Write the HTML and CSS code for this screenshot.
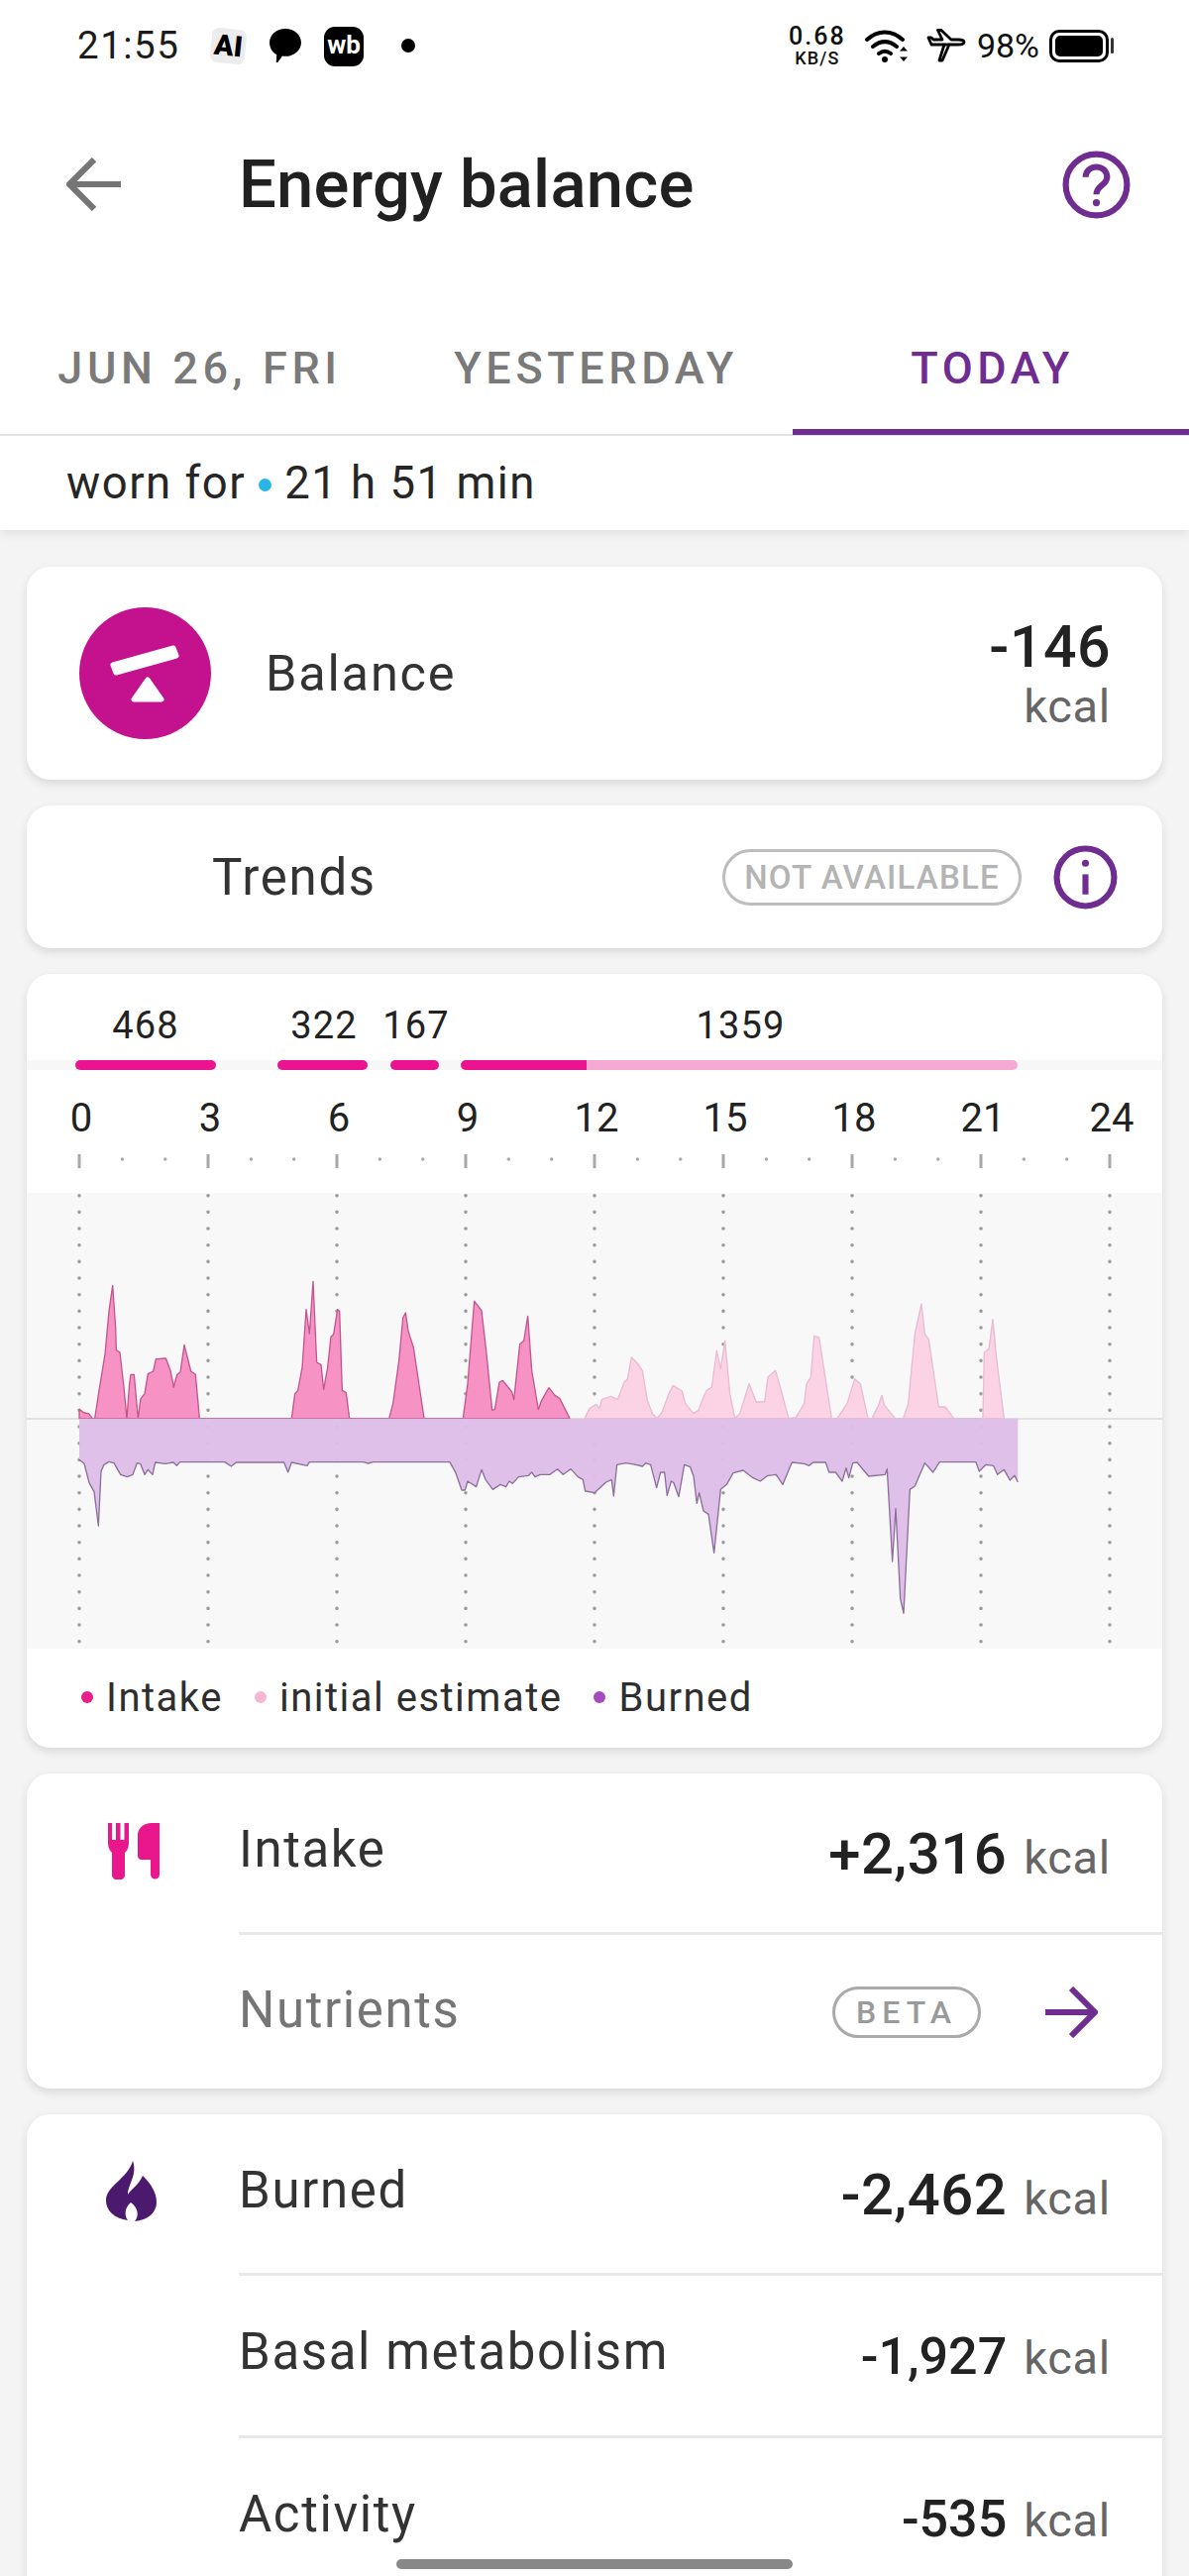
FILE: index.html
```html
<!DOCTYPE html>
<html lang="en">
<head>
<meta charset="utf-8">
<title>Energy balance</title>
<link rel="stylesheet" href="styles.css">
</head>
<body>
<div class="screen">
  <header class="top">
    <div class="status">
      <div class="status-left">
        <span class="clock">21:55</span>
        <span class="ai-badge">AI</span>
        <svg class="ic-msg" viewBox="0 0 31 33"><path d="M15.5 0C24 0 31 6 31 13.5S24 27 15.5 27c-1 0-2 0-3-.3L8 33c-1 .4-1.5-.2-1.400-1l.4-6.500C2.700 23 0 18.500 0 13.500 0 6 7 0 15.500 0Z"/></svg>
        <span class="wb-badge">wb</span>
        <span class="status-dot"></span>
      </div>
      <div class="status-right">
        <div class="speed"><span class="speed-num">0.68</span><span class="speed-unit">KB/S</span></div>
        <svg class="ic-wifi" viewBox="0 0 45 34"><path class="wifi-arc" d="M2 11C13 1 27 1 38 11M8 18c8-6.500 16-6.500 24 0M14 25c4-3 8-3 12 0"/><circle cx="20" cy="31" r="3"/><path d="M39 18l4 4.500h-8ZM39 33l4-4.500h-8Z"/></svg>
        <svg class="ic-plane" viewBox="0 0 40 34"><path class="plane-line" d="M2 9l3 7h27c4 0 6-1 6-2.500S35 11 32 11h-7L15 1.500h-3.500L16 11H7L5 9ZM18 16h5l-7 16h-3Z"/></svg>
        <span class="battery-pct">98%</span>
        <div class="battery"><span class="battery-fill"></span></div>
        <span class="battery-nub"></span>
      </div>
    </div>
    <div class="appbar">
      <svg class="ic-back" viewBox="0 0 53 52"><path d="M53 26H5M27 2 3 26l24 24"/></svg>
      <h1 class="title">Energy balance</h1>
      <svg class="ic-help" viewBox="0 0 67 67"><circle cx="33.500" cy="33.500" r="30"/><path d="M23 26c0-6 5-10 10.500-10S44 20 44 26c0 8-10.500 8-10.500 17"/><circle class="solid" cx="33.500" cy="51" r="3.500"/></svg>
    </div>
    <nav class="tabs">
      <div class="tab">JUN 26, FRI</div>
      <div class="tab">YESTERDAY</div>
      <div class="tab tab-active">TODAY</div>
    </nav>
    <div class="worn"><span>worn for</span><span class="worn-dot"></span><span>21 h 51 min</span></div>
  </header>

  <main class="cards">
    <section class="card balance">
      <svg class="ic-balance" viewBox="0 0 133 133"><circle cx="66.500" cy="66.500" r="66.500" class="balance-disc"/><path class="balance-mark" d="M34 58 95 41l3 8-61 17ZM69 73l14 20H55Z"/></svg>
      <div class="balance-name">Balance</div>
      <div class="balance-value"><div class="num">-146</div><div class="unit">kcal</div></div>
    </section>

    <section class="card trends">
      <div class="trends-name">Trends</div>
      <span class="pill pill-na">NOT AVAILABLE</span>
      <svg class="ic-info" viewBox="0 0 64 64"><circle cx="32" cy="32" r="28.500"/><path d="M32 29v20"/><circle class="solid" cx="32" cy="18" r="3.500"/></svg>
    </section>

    <section class="card chart">
      <div class="segments">
        <div class="seg" style="width:142px;margin-left:0"><span>468</span><i class="bar"></i></div>
        <div class="seg" style="width:91px;margin-left:62px"><span>322</span><i class="bar"></i></div>
        <div class="seg" style="width:49px;margin-left:23px"><span>167</span><i class="bar"></i></div>
        <div class="seg" style="width:562px;margin-left:22px"><span>1359</span><i class="bar bar-split" style="--done:22.600%"></i></div>
      </div>
      <div class="hours">
        <span>0</span><span>3</span><span>6</span><span>9</span><span>12</span><span>15</span><span>18</span><span>21</span><span>24</span>
      </div>
      <svg class="plot" viewBox="27 1160 1146 504">
        <rect class="plot-bg" x="27" y="1204" width="1146" height="460"/>
        <g class="ticks">
          <path d="M80 1165v14M210 1165v14M340 1165v14M470 1165v14M600 1165v14M730 1165v14M860 1165v14M990 1165v14M1120 1165v14"/>
        </g>
        <g class="minor">
          <path d="M123.300 1170h.1M166.700 1170h.1M253.300 1170h.1M296.700 1170h.1M383.300 1170h.1M426.700 1170h.1M513.300 1170h.1M556.700 1170h.1M643.300 1170h.1M686.700 1170h.1M773.300 1170h.1M816.700 1170h.1M903.300 1170h.1M946.700 1170h.1M1033.300 1170h.1M1076.700 1170h.1"/>
        </g>
        <g class="gridlines">
          <path d="M80 1206.700V1660M210 1206.700V1660M340 1206.700V1660M470 1206.700V1660M600 1206.700V1660M730 1206.700V1660M860 1206.700V1660M990 1206.700V1660M1120 1206.700V1660"/>
        </g>
        <path class="zero" d="M27 1432H1173"/>
        <g transform="translate(60 1240) scale(.33333)">
          <path class="area-est" transform="translate(1440 0)" d="M150 575L165 545L185 532L195 545L202 518L230 508L250 518L270 465L280 455L292 390L310 408L325 430L340 520L355 560L370 575L385 555L405 500L418 475L445 492L455 530L480 560L495 550L510 510L520 490L535 480L550 370L562 425L575 340L590 500L605 575L620 560L648 470L670 525L695 525L705 450L728 430L745 490L768 575L790 572L815 530L822 470L835 450L845 325L860 330L898 575L915 575L945 530L968 455L985 470L1008 575L1020 575L1040 535L1050 505L1058 535L1090 575L1115 575L1130 530L1150 320L1170 228L1180 320L1192 335L1222 540L1242 540L1268 575L1356 575L1360 375L1374 365L1386 275L1398 400L1420 575Z"/>
          <path class="area-intake" d="M60 575L60 548L75 558L88 560L100 575L107 575L120 490L138 380L150 250L161 172L170 300L172 368L183 375L195 480L204 575L212 470L216 442L226 442L232 510L238 575L246 515L258 500L268 440L284 432L292 395L322 393L336 430L346 480L356 442L366 435L378 352L398 432L412 442L424 575L703 575L713 500L722 490L735 420L747 245L757 318L768 160L779 405L792 412L800 487L812 420L822 328L830 320L842 245L848 250L856 490L868 497L878 575L998 575L1010 530L1028 400L1040 270L1048 255L1056 310L1072 360L1104 575L1222 575L1236 470L1256 220L1278 248L1292 370L1310 550L1318 548L1332 465L1342 460L1370 495L1376 518L1394 350L1406 340L1418 265L1430 430L1450 548L1460 520L1482 482L1500 505L1515 515L1545 575Z"/>
          <path class="area-burn" d="M60 575L60 700L75 712L90 770L105 797L118 900L126 735L135 715L150 706L165 710L185 745L205 752L222 745L235 710L245 712L258 745L268 730L282 745L290 708L320 712L345 708L355 718L365 707L500 707L520 720L535 708L680 708L692 738L703 708L750 718L757 707L920 707L935 711L950 707L1182 707L1200 740L1218 792L1228 792L1236 765L1262 782L1278 730L1290 760L1312 790L1335 775L1352 782L1362 765L1372 772L1390 752L1420 748L1430 738L1440 752L1455 745L1485 745L1508 728L1525 745L1548 728L1570 752L1585 760L1592 795L1620 800L1655 768L1672 760L1678 810L1688 715L1715 710L1745 715L1765 720L1775 710L1790 715L1808 785L1820 738L1832 738L1840 808L1852 765L1860 770L1875 812L1892 715L1910 722L1920 750L1930 832L1937 800L1950 855L1965 865L1982 982L2002 790L2020 775L2040 740L2070 732L2100 755L2122 765L2145 748L2170 745L2190 775L2218 708L2255 712L2270 718L2282 708L2320 708L2330 738L2350 738L2370 765L2382 725L2390 755L2402 710L2415 708L2450 750L2500 745L2506 728L2522 1008L2532 848L2546 1120L2556 1165L2575 790L2590 780L2620 710L2645 738L2665 707L2775 707L2785 735L2805 715L2828 718L2840 745L2860 730L2878 762L2892 748L2902 768L2902 575Z"/>
          <path class="line-burn" d="M60 700L75 712L90 770L105 797L118 900L126 735L135 715L150 706L165 710L185 745L205 752L222 745L235 710L245 712L258 745L268 730L282 745L290 708L320 712L345 708L355 718L365 707L500 707L520 720L535 708L680 708L692 738L703 708L750 718L757 707L920 707L935 711L950 707L1182 707L1200 740L1218 792L1228 792L1236 765L1262 782L1278 730L1290 760L1312 790L1335 775L1352 782L1362 765L1372 772L1390 752L1420 748L1430 738L1440 752L1455 745L1485 745L1508 728L1525 745L1548 728L1570 752L1585 760L1592 795L1620 800L1655 768L1672 760L1678 810L1688 715L1715 710L1745 715L1765 720L1775 710L1790 715L1808 785L1820 738L1832 738L1840 808L1852 765L1860 770L1875 812L1892 715L1910 722L1920 750L1930 832L1937 800L1950 855L1965 865L1982 982L2002 790L2020 775L2040 740L2070 732L2100 755L2122 765L2145 748L2170 745L2190 775L2218 708L2255 712L2270 718L2282 708L2320 708L2330 738L2350 738L2370 765L2382 725L2390 755L2402 710L2415 708L2450 750L2500 745L2506 728L2522 1008L2532 848L2546 1120L2556 1165L2575 790L2590 780L2620 710L2645 738L2665 707L2775 707L2785 735L2805 715L2828 718L2840 745L2860 730L2878 762L2892 748L2902 768"/>
        </g>
      </svg>
      <div class="legend">
        <span class="legend-item"><i class="dot dot-intake"></i>Intake</span>
        <span class="legend-item"><i class="dot dot-est"></i>initial estimate</span>
        <span class="legend-item"><i class="dot dot-burn"></i>Burned</span>
      </div>
    </section>

    <section class="card list list-intake">
      <div class="side">
        <svg class="ic-food" viewBox="0 0 52 57"><path d="M0 0h4v17h4V0h4.500v17h4V0H21v20c0 5-2 8-4 10v23a6.500 4.500 0 0 1-13 0V30C2 28 0 25 0 20ZM30 12C30 5 36 0 44 0h8v52a4.500 4.500 0 0 1-9 0V37h-9c-3 0-4-2-4-4Z"/></svg>
      </div>
      <div class="rows">
        <div class="row row-first"><span class="label">Intake</span><span class="val"><b class="num">+2,316</b><span class="unit">kcal</span></span></div>
        <div class="row row-nav"><span class="label label-muted">Nutrients</span><span class="pill pill-beta">BETA</span>
          <svg class="ic-next" viewBox="0 0 53 52"><path d="M0 26h48M26 2l24 24-24 24"/></svg>
        </div>
      </div>
    </section>

    <section class="card list list-burned">
      <div class="side side-fire">
        <svg class="ic-fire" viewBox="0 0 51 61"><path d="M27 0C32 14 22 24 22 34 26 28 33 24 37 15 46 24 51 32 51 42 51 52 42 60 29 61 34 55 32 47 25 42 19 47 18 55 22 60 8 58 0 50 0 40 0 25 22 18 27 0Z"/></svg>
      </div>
      <div class="rows">
        <div class="row row-first"><span class="label">Burned</span><span class="val"><b class="num">-2,462</b><span class="unit">kcal</span></span></div>
        <div class="row row-tall"><span class="label">Basal metabolism</span><span class="val"><b class="num num-sub">-1,927</b><span class="unit">kcal</span></span></div>
        <div class="row row-tall"><span class="label">Activity</span><span class="val"><b class="num num-sub">-535</b><span class="unit">kcal</span></span></div>
      </div>
    </section>
  </main>
  <div class="home-bar"></div>
</div>
</body>
</html>
```
FILE: styles.css
```css
* { box-sizing: border-box; }
html, body { margin: 0; padding: 0; }
body { font-family: Roboto, "Noto Sans", sans-serif; color: #2b2b2b; background: #f4f4f4; }
.screen { position: relative; width: 1200px; height: 2600px; overflow: hidden; background: #f4f4f4; }

/* top */
.top { background: #fff; box-shadow: 0 3px 10px rgba(0,0,0,.09); position: relative; height: 535px; }
.status { height: 92px; display: flex; justify-content: space-between; align-items: flex-start; padding: 26px 76px 0 78px; }
.status-left, .status-right { display: flex; align-items: center; height: 40px; }
.clock { font-size: 38.500px; letter-spacing: 1.500px; color: #1c1c1c; width: 135px; line-height: 40px; }
.ai-badge { width: 35px; height: 35px; background: #ececec; border-radius: 7px; transform: rotate(6deg); font: 900 29px/35px Roboto, sans-serif; text-align: center; color: #000; }
.ic-msg { width: 32px; height: 34px; margin-left: 24px; fill: #000; }
.wb-badge { width: 40px; height: 40px; margin-left: 23px; margin-top: 1px; background: #000; border-radius: 11px; color: #fff; font: 700 26px/37px Roboto, sans-serif; text-align: center; }
.status-dot { width: 14px; height: 14px; margin-left: 38px; border-radius: 50%; background: #000; }
.speed { display: flex; flex-direction: column; align-items: center; width: 54px; color: #111; }
.speed-num { font-size: 25px; font-weight: 500; line-height: 25px; letter-spacing: 2px; }
.speed-unit { font-size: 18px; font-weight: 500; line-height: 19px; letter-spacing: 1.200px; }
.ic-wifi { width: 45px; height: 34px; margin-left: 21px; fill: #000; }
.wifi-arc { fill: none; stroke: #000; stroke-width: 4; stroke-linecap: round; }
.ic-plane { width: 42px; height: 34px; margin-left: 16px; }
.plane-line { fill: #fff; stroke: #000; stroke-width: 2.800; stroke-linejoin: round; }
.battery-pct { font-size: 34px; margin-left: 10px; color: #111; }
.battery { width: 60px; height: 33px; margin-left: 10px; border: 3px solid #000; border-radius: 10px; padding: 3px; }
.battery-fill { display: block; width: 100%; height: 100%; background: #000; border-radius: 5px; }
.battery-nub { width: 3px; height: 16px; margin-left: 2px; background: #333; border-radius: 2px; }

.appbar { height: 188px; display: flex; align-items: center; padding: 0 59px 0 67px; }
.ic-back { width: 55px; height: 54px; fill: none; stroke: #757575; stroke-width: 6; }
.title { flex: 1; margin: 0 0 0 119px; font-size: 67px; font-weight: 500; color: #212121; letter-spacing: .2px; line-height: 80px; }
.ic-help { width: 69px; height: 69px; fill: none; stroke: #6f2c91; stroke-width: 6; }
.solid { fill: #6f2c91; stroke: none; }

.tabs { display: grid; grid-template-columns: repeat(3, 400px); height: 160px; border-bottom: 2px solid #e2e2e2; }
.tab { text-align: center; padding: 62px 0 0 3px; font-size: 45px; line-height: 60px; font-weight: 500; letter-spacing: 4.600px; color: #7a7a7a; }
.tab-active { color: #6f2c91; border-bottom: 6px solid #6f2c91; margin-bottom: -1px; }
.worn { display: flex; align-items: center; gap: 13px; height: 95px; padding-left: 67px; font-size: 45.500px; letter-spacing: 1.500px; color: #262626; }
.worn-dot { width: 13px; height: 13px; border-radius: 50%; background: #29b6e6; margin-top: 4px; }

/* cards */
.cards { display: flex; flex-direction: column; gap: 26px; padding: 37px 27px 0; }
.card { background: #fff; border-radius: 24px; box-shadow: 0 4px 10px rgba(0,0,0,.11); flex: none; }
.balance { height: 215px; display: flex; align-items: center; padding: 0 52px 0 53px; }
.ic-balance { width: 133px; height: 133px; margin-top: -1px; flex: none; }
.balance-disc { fill: #c4128f; }
.balance-mark { fill: #fff; stroke: #fff; stroke-width: 5; stroke-linejoin: round; }
.balance-name { flex: 1; margin-left: 55px; font-size: 50.500px; letter-spacing: 1.800px; color: #333; }
.balance-value { text-align: right; margin-top: 4px; }
.balance-value .num { font-size: 59px; font-weight: 500; line-height: 62px; color: #222; }
.balance-value .unit { display: block; line-height: 58px; }
.unit { font-size: 47px; color: #666; font-weight: 400; letter-spacing: .7px; }

.trends { height: 144px; display: flex; align-items: center; padding: 0 45px 0 187px; }
.trends-name { flex: 1; font-size: 51px; letter-spacing: 1.700px; color: #333; }
.pill { display: inline-flex; align-items: center; justify-content: center; border-radius: 30px; font-weight: 500; }
.pill-na { width: 302px; height: 57px; border: 3px solid #bdbdbd; color: #b4b4b4; font-size: 33px; letter-spacing: 1.200px; }
.ic-info { width: 65px; height: 65px; margin-left: 32px; fill: none; stroke: #6f2c91; stroke-width: 6; }

.chart { height: 781px; overflow: hidden; }
.segments { display: flex; align-items: flex-end; height: 97px; padding-left: 49px; background: linear-gradient(#f7f7f7, #f7f7f7) bottom / 100% 10px no-repeat; }
.seg { display: flex; flex-direction: column; align-items: center; flex: none; }
.seg span { font-size: 38px; line-height: 44px; letter-spacing: 1.200px; color: #222; margin-bottom: 13px; }
.seg + .seg span { padding-left: 3px; }
.bar { display: block; width: 100%; height: 10px; border-radius: 5px; background: #ec1390; }
.bar-split { background: linear-gradient(90deg, #ec1390 var(--done), #f4aad2 var(--done)); }
.hours { display: grid; grid-template-columns: repeat(9, 130px); margin: 26px 0 0 -10px; height: 54px; font-size: 40px; line-height: 46px; color: #222; text-align: center; }
.plot { display: block; width: 1146px; height: 504px; }
.plot-bg { fill: #f8f8f8; }
.ticks path { stroke: #a8a8a8; stroke-width: 3; fill: none; }
.minor path { stroke: #aaa; stroke-width: 3.400; stroke-linecap: round; fill: none; }
.gridlines path { stroke: #9c9c9c; stroke-width: 3.600; stroke-linecap: round; stroke-dasharray: 0 16.667; fill: none; }
.zero { stroke: #e2e2e2; stroke-width: 2; fill: none; }
.area-est { fill: #fbd3e5; stroke: #e8bcd2; stroke-width: 4; stroke-linejoin: round; }
.area-intake { fill: #f793c4; stroke: #c4568f; stroke-width: 4; stroke-linejoin: round; }
.area-burn { fill: #ddbde7; fill-opacity: .96; }
.line-burn { fill: none; stroke: #8d6f9c; stroke-width: 4; stroke-linejoin: round; }
.legend { display: flex; align-items: center; height: 99px; margin-top: -2px; padding: 3px 0 0 55px; gap: 32px; font-size: 40px; letter-spacing: 1.500px; color: #2e2e2e; }
.legend-item { display: flex; align-items: center; gap: 13px; }
.dot { width: 12px; height: 12px; border-radius: 50%; }
.dot-intake { background: #e91e8c; }
.dot-est { background: #f6b7d3; }
.dot-burn { background: #a64bbf; }

.list { display: flex; }
.list-intake { height: 318px; }
.list-burned { height: 560px; }
.side { width: 214px; flex: none; padding: 50px 0 0 82px; }
.side-fire { padding: 47px 0 0 80px; }
.ic-food { display: block; width: 52px; height: 57px; fill: #e9168c; }
.ic-fire { display: block; width: 51px; height: 61px; fill: #4b1a6e; }
.rows { flex: 1; display: flex; flex-direction: column; }
.row { display: flex; justify-content: space-between; align-items: center; padding: 0 52px 0 0; }
.row + .row { border-top: 3px solid #e8e8e8; }
.row-first { height: 160px; }
.row-tall { height: 164px; }
.row-nav { height: 158px; justify-content: flex-start; padding-right: 54px; }
.label { font-size: 51px; letter-spacing: 1.600px; color: #333; margin-top: -8px; }
.label-muted { color: #757575; flex: 1; margin-top: -4px; }
.val { display: flex; align-items: baseline; gap: 17px; margin-top: 1px; }
.num { font-size: 58px; font-weight: 500; color: #222; letter-spacing: .5px; }
.num-sub { font-size: 52px; letter-spacing: 0; }
.pill-beta { width: 150px; height: 52px; border: 3px solid #aaa; color: #9a9a9a; font-size: 32px; letter-spacing: 6px; }
.ic-next { width: 53px; height: 52px; margin-left: 65px; margin-right: 11px; fill: none; stroke: #6f2c91; stroke-width: 6; }
.home-bar { position: absolute; left: 400px; top: 2583px; width: 400px; height: 10px; border-radius: 5px; background: #888; }
```
